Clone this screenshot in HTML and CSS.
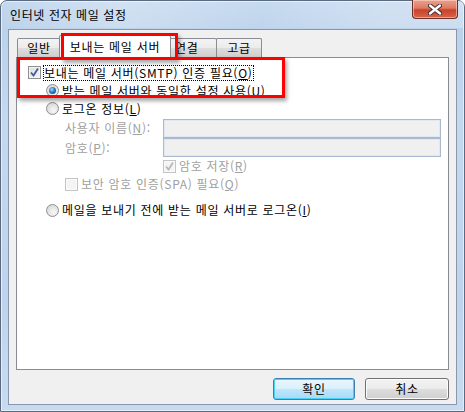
FILE: index.html
```html
<!DOCTYPE html>
<html lang="ko">
<head>
<meta charset="utf-8">
<title>인터넷 전자 메일 설정</title>
<link rel="stylesheet" href="styles.css">
</head>
<body>
<div class="window">
  <div class="titlebar">
    <span class="title">인터넷 전자 메일 설정</span>
    <div class="close">
      <svg width="14" height="11" viewBox="0 0 14 11">
        <path d="M2 1.5 L12 9.5 M12 1.5 L2 9.5" stroke="#3b2a2a" stroke-width="4.2" stroke-linecap="round"/>
        <path d="M2 1.5 L12 9.5 M12 1.5 L2 9.5" stroke="#ffffff" stroke-width="2.4" stroke-linecap="round"/>
      </svg>
    </div>
  </div>
  <div class="client">
    <div class="tabs">
      <div class="tab first">일반</div>
      <div class="tab selected">보내는 메일 서버</div>
      <div class="tab">연결</div>
      <div class="tab">고급</div>
      <div class="mark mark-tab"></div>
    </div>
    <div class="panel">
      <div class="mark mark-group"></div>
      <div class="row r1">
        <span class="check checked"><svg width="11" height="11" viewBox="0 0 11 11"><path d="M2 5.5 L4.5 8.5 L9 1.5" fill="none" stroke="#3d5b9e" stroke-width="1.8"/></svg></span>
        <span class="label focus">보내는 메일 서버(SMTP) 인증 필요(<u>O</u>)</span>
      </div>
      <div class="row r2">
        <span class="radio on"><span class="dot"></span></span>
        <span class="label">받는 메일 서버와 동일한 설정 사용(<u>U</u>)</span>
      </div>
      <div class="row r3">
        <span class="radio"></span>
        <span class="label">로그온 정보(<u>L</u>)</span>
      </div>
      <div class="row r4 field">
        <span class="label dis flabel">사용자 이름(<u>N</u>):</span>
        <span class="input"></span>
      </div>
      <div class="row r5 field">
        <span class="label dis flabel">암호(<u>P</u>):</span>
        <span class="input"></span>
      </div>
      <div class="row r6">
        <span class="check dis"><svg width="11" height="11" viewBox="0 0 11 11"><path d="M2 5.5 L4.5 8.5 L9 1.5" fill="none" stroke="#b8b8b8" stroke-width="1.8"/></svg></span>
        <span class="label dis">암호 저장(<u>R</u>)</span>
      </div>
      <div class="row r7">
        <span class="check dis"></span>
        <span class="label dis">보안 암호 인증(SPA) 필요(<u>Q</u>)</span>
      </div>
      <div class="row r8">
        <span class="radio"></span>
        <span class="label">메일을 보내기 전에 받는 메일 서버로 로그온(<u>I</u>)</span>
      </div>
    </div>
    <div class="buttons">
      <div class="btn default">확인</div>
      <div class="btn">취소</div>
    </div>
  </div>
</div>
</body>
</html>
```

FILE: styles.css
```css
* { box-sizing: border-box; }
html, body { margin: 0; padding: 0; background: #ffffff; }
body {
  font-family: "Noto Sans CJK KR", "Noto Sans", sans-serif;
  font-size: 12px;
  letter-spacing: 0.7px;
  color: #000;
}
.window {
  width: 465px;
  height: 412px;
  border: 1px solid #5a6a80;
  border-radius: 7px 7px 0 0;
  background: linear-gradient(180deg, #c3d8ef 0px, #bcd2ea 28px, #c4d8ee 120px, #bfd4ec 300px, #c8dbf0 412px);
  display: flex;
  flex-direction: column;
  box-shadow: inset 0 0 0 1px #e4eefa;
}
.titlebar {
  height: 27px;
  display: flex;
  align-items: flex-start;
  justify-content: space-between;
  padding-left: 9px;
  background: linear-gradient(100deg, rgba(255,255,255,0.0) 0px, rgba(255,255,255,0.25) 120px, rgba(255,255,255,0.05) 260px, rgba(255,255,255,0.25) 380px);
}
.title {
  margin-top: 6px;
  line-height: 16px;
  font-size: 12px;
  letter-spacing: 0.6px;
  color: #000;
}
.close {
  width: 46px;
  height: 19px;
  margin-right: 6px;
  margin-top: -1px;
  border: 1px solid #6b3029;
  border-top: none;
  border-radius: 0 0 4px 4px;
  background: linear-gradient(180deg, #eca08e 0%, #de7a63 45%, #c8432a 55%, #d5654a 100%);
  box-shadow: inset 0 0 0 1px rgba(255,220,210,0.55);
  display: flex;
  align-items: center;
  justify-content: center;
}
.client {
  margin: 1px 7px 0 7px;
  height: 376px;
  background: #f0f0f0;
  border: 1px solid #8897ab;
  padding: 5px 7px 0 7px;
  display: flex;
  flex-direction: column;
}
.tabs {
  position: relative;
  height: 22px;
  display: flex;
  align-items: flex-end;
  padding-left: 1px;
  z-index: 2;
}
.tab {
  height: 19px;
  border: 1px solid #898c95;
  border-bottom: none;
  border-radius: 2px 2px 0 0;
  background: linear-gradient(180deg, #f3f3f3 0%, #ebebeb 50%, #dddddd 51%, #cfcfcf 100%);
  line-height: 17px;
  padding: 0 8px;
  margin-left: -1px;
  margin-bottom: 0;
  color: #000;
}
.tab.first { width: 44px; text-align: center; padding: 0; margin-left: 0; }
.tab.selected {
  height: 23px;
  width: 112px;
  padding: 0;
  text-align: center;
  line-height: 21px;
  background: #ffffff;
  margin-left: -2px;
  margin-right: -2px;
  margin-bottom: -1px;
  position: relative;
  z-index: 3;
}
.tab:nth-child(3) { width: 49px; padding-left: 6px; text-align: left; }
.tab:nth-child(4) { width: 46px; text-align: center; padding: 0; }
.mark {
  position: absolute;
  border: 3px solid #ff0000;
  box-shadow: 2px 3px 4px rgba(0,0,0,0.35);
  pointer-events: none;
  z-index: 5;
}
.mark-tab { left: 45px; top: -2px; width: 117px; height: 27px; }
.panel {
  position: relative;
  height: 313px;
  background: #ffffff;
  border: 1px solid #898c95;
  padding-top: 5px;
  display: flex;
  flex-direction: column;
}
.mark-group { left: 0px; top: -1px; width: 268px; height: 41px; }
.row {
  display: flex;
  align-items: center;
  white-space: nowrap;
}
.label { line-height: 14px; }
.label u { text-decoration: underline; text-underline-offset: 1px; }
.label.focus { outline: 1px dotted #000; outline-offset: 0; }
.dis { color: #a0a0a0; }
.r1 { height: 19px; padding-left: 11px; }
.r2 { height: 17px; padding-left: 29px; }
.r3 { height: 19px; padding-left: 29px; }
.r4 { height: 20px; padding-left: 48px; }
.r5 { height: 19px; padding-left: 48px; }
.r6 { height: 18px; padding-left: 146px; }
.r7 { height: 18px; padding-left: 48px; }
.r8 { height: 18px; padding-left: 29px; margin-top: 8px; }
.flabel { width: 98px; }
.input {
  width: 278px;
  height: 19px;
  border: 1px solid #aab9cf;
  background: #f0f0f0;
  box-shadow: inset 0 0 0 1px #e2e8f1;
}
.check {
  width: 13px;
  height: 13px;
  border: 1px solid #8f8f8f;
  background: linear-gradient(135deg, #dcdcdc 0%, #f6f6f6 100%);
  box-shadow: inset 0 0 0 1px #f4f4f4;
  margin-right: 3px;
  display: inline-flex;
  align-items: center;
  justify-content: center;
  flex: none;
}
.check.dis {
  border-color: #c4c4c4;
  background: #f4f4f4;
  box-shadow: inset 0 0 0 1px #fafafa;
}
.radio {
  width: 13px;
  height: 13px;
  border-radius: 50%;
  border: 1px solid #8e8f8f;
  background: radial-gradient(circle at 60% 65%, #f7f7f7 0%, #dcdcdc 70%);
  margin-right: 3px;
  display: inline-flex;
  align-items: center;
  justify-content: center;
  flex: none;
}
.radio .dot {
  width: 7px;
  height: 7px;
  border-radius: 50%;
  background: radial-gradient(circle at 40% 35%, #a6dcf6 0%, #2d7cc4 45%, #0d3d86 100%);
}
.buttons {
  display: flex;
  justify-content: flex-end;
  gap: 10px;
  margin-top: 8px;
  padding-right: 0px;
}
.btn {
  width: 84px;
  height: 22px;
  border: 1px solid #707070;
  border-radius: 3px;
  background: linear-gradient(180deg, #f2f2f2 0%, #ebebeb 50%, #dddddd 51%, #cfcfcf 100%);
  box-shadow: inset 0 0 0 1px #fcfcfc;
  text-align: center;
  line-height: 20px;
}
.btn.default {
  width: 82px;
  border-color: #3c7fb1;
  background: linear-gradient(180deg, #eaf6fd 0%, #d9f0fc 50%, #bee6fd 51%, #a7d9f5 100%);
  box-shadow: inset 0 0 0 1px #48d2f8;
}
```
